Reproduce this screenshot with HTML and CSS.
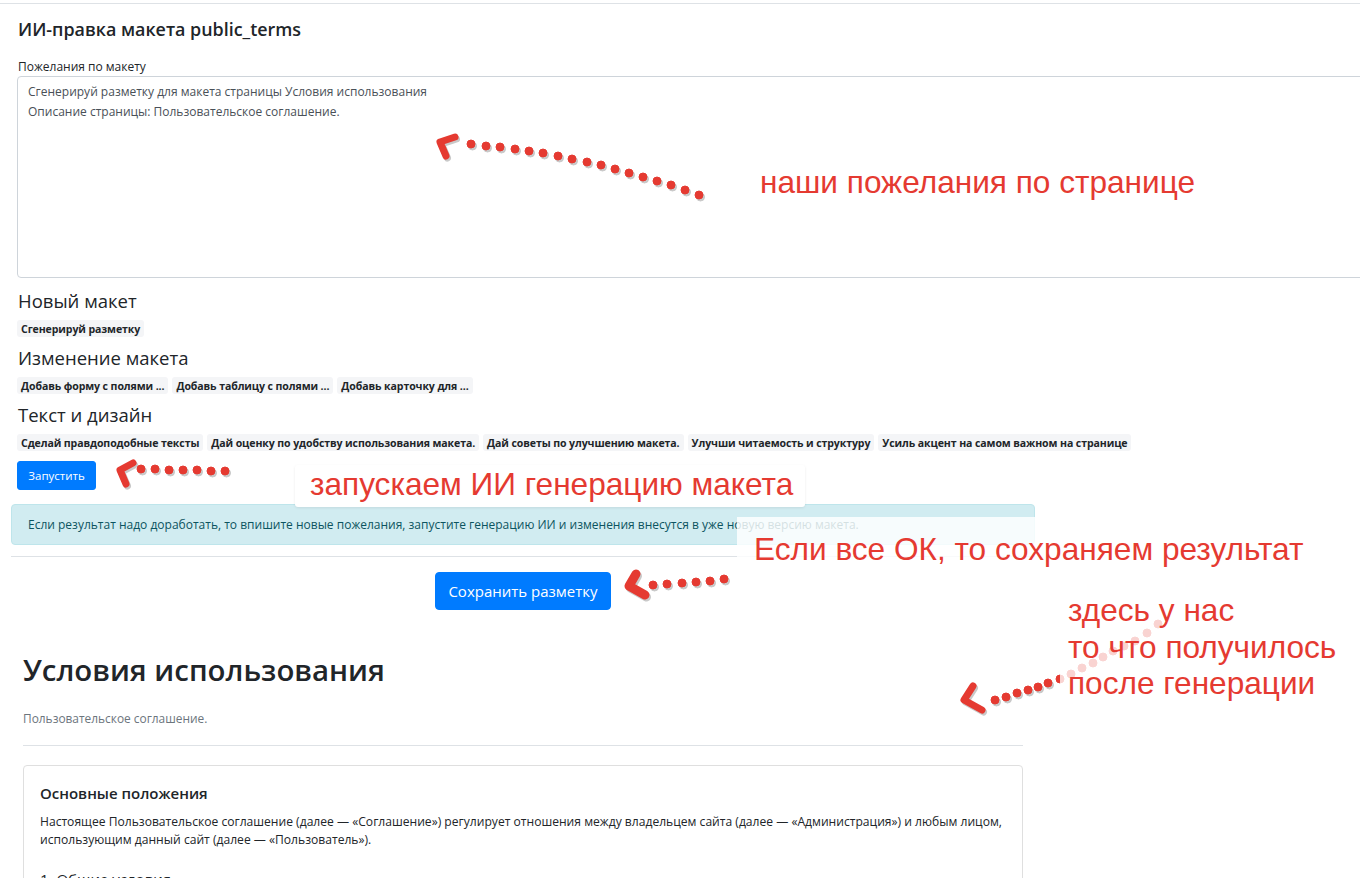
FILE: index.html
```html
<!DOCTYPE html>
<html lang="ru">
<head>
<meta charset="utf-8">
<title>ИИ-правка макета public_terms</title>
<link rel="stylesheet" href="styles.css">
</head>
<body>
<div class="page">
  <section class="editor">
    <h5 class="title">ИИ-правка макета public_terms</h5>
    <label class="label" for="wish">Пожелания по макету</label>
    <div class="textarea" id="wish">
      <div>Сгенерируй разметку для макета страницы Условия использования</div>
      <div>Описание страницы: Пользовательское соглашение.</div>
    </div>

    <h6 class="group">Новый макет</h6>
    <div class="chips">
      <span class="chip">Сгенерируй разметку</span>
    </div>

    <h6 class="group">Изменение макета</h6>
    <div class="chips">
      <span class="chip">Добавь форму с полями ...</span>
      <span class="chip">Добавь таблицу с полями ...</span>
      <span class="chip">Добавь карточку для ...</span>
    </div>

    <h6 class="group">Текст и дизайн</h6>
    <div class="chips">
      <span class="chip">Сделай правдоподобные тексты</span>
      <span class="chip">Дай оценку по удобству использования макета.</span>
      <span class="chip">Дай советы по улучшению макета.</span>
      <span class="chip">Улучши читаемость и структуру</span>
      <span class="chip">Усиль акцент на самом важном на странице</span>
    </div>

    <button class="btn btn-run" type="button">Запустить</button>
  </section>

  <section class="result">
    <div class="alert">Если результат надо доработать, то впишите новые пожелания, запустите генерацию ИИ и изменения внесутся в уже новую версию макета.</div>
    <hr class="sep">
    <div class="save-row">
      <button class="btn btn-save" type="button">Сохранить разметку</button>
    </div>

    <div class="preview">
      <h1 class="preview-title">Условия использования</h1>
      <p class="preview-sub">Пользовательское соглашение.</p>
      <hr class="preview-hr">
      <div class="card">
        <h5 class="card-title">Основные положения</h5>
        <p class="card-text">Настоящее Пользовательское соглашение (далее — «Соглашение») регулирует отношения между владельцем сайта (далее — «Администрация») и любым лицом, использующим данный сайт (далее — «Пользователь»).</p>
        <h6 class="card-sub">1. Общие условия</h6>
      </div>
    </div>
  </section>
</div>

<svg class="arrows" width="1360" height="878" viewBox="0 0 1360 878" aria-hidden="true">
  <g fill="#c9c9c9" stroke="#c9c9c9" transform="translate(1.5,2)">
    <polyline points="446,156 440,142 455,137" fill="none" stroke-width="7" stroke-linecap="round" stroke-linejoin="round"/>
    <circle cx="471" cy="144" r="4"/><circle cx="486" cy="146" r="4"/><circle cx="500" cy="147" r="4"/><circle cx="515" cy="149" r="4"/><circle cx="529" cy="151" r="4"/><circle cx="543" cy="153" r="4"/><circle cx="558" cy="156" r="4"/><circle cx="572" cy="159" r="4"/><circle cx="587" cy="162" r="4"/><circle cx="601" cy="165" r="4"/><circle cx="615" cy="169" r="4"/><circle cx="629" cy="173" r="4"/><circle cx="643" cy="177" r="4"/><circle cx="657" cy="181" r="4"/><circle cx="671" cy="185" r="4"/><circle cx="685" cy="190" r="4"/><circle cx="699" cy="195" r="4"/>
    <polyline points="126,484 120,470 133,463" fill="none" stroke-width="7" stroke-linecap="round" stroke-linejoin="round"/>
    <circle cx="141" cy="469" r="4"/><circle cx="155" cy="469" r="4"/><circle cx="169" cy="470" r="4"/><circle cx="183" cy="470" r="4"/><circle cx="197" cy="470" r="4"/><circle cx="211" cy="471" r="4"/><circle cx="225" cy="471" r="4"/>
    <polyline points="636,574 629,586 645,595" fill="none" stroke-width="9" stroke-linecap="round" stroke-linejoin="round"/>
    <circle cx="653" cy="585" r="4"/><circle cx="667" cy="584" r="4"/><circle cx="682" cy="583" r="4"/><circle cx="696" cy="582" r="4"/><circle cx="710" cy="581" r="4"/><circle cx="724" cy="579" r="4"/>
    <polyline points="973,686 964,700 982,710" fill="none" stroke-width="7" stroke-linecap="round" stroke-linejoin="round"/>
    <circle cx="995" cy="700" r="4"/><circle cx="1006" cy="697" r="4"/><circle cx="1017" cy="693" r="4"/><circle cx="1028" cy="690" r="4"/><circle cx="1038" cy="687" r="4"/><circle cx="1048" cy="683" r="4"/>
  </g>
  <g fill="#e53a31" stroke="#e53a31">
    <polyline points="446,156 440,142 455,137" fill="none" stroke-width="7" stroke-linecap="round" stroke-linejoin="round"/>
    <circle cx="471" cy="144" r="4"/><circle cx="486" cy="146" r="4"/><circle cx="500" cy="147" r="4"/><circle cx="515" cy="149" r="4"/><circle cx="529" cy="151" r="4"/><circle cx="543" cy="153" r="4"/><circle cx="558" cy="156" r="4"/><circle cx="572" cy="159" r="4"/><circle cx="587" cy="162" r="4"/><circle cx="601" cy="165" r="4"/><circle cx="615" cy="169" r="4"/><circle cx="629" cy="173" r="4"/><circle cx="643" cy="177" r="4"/><circle cx="657" cy="181" r="4"/><circle cx="671" cy="185" r="4"/><circle cx="685" cy="190" r="4"/><circle cx="699" cy="195" r="4"/>
    <polyline points="126,484 120,470 133,463" fill="none" stroke-width="7" stroke-linecap="round" stroke-linejoin="round"/>
    <circle cx="141" cy="469" r="4"/><circle cx="155" cy="469" r="4"/><circle cx="169" cy="470" r="4"/><circle cx="183" cy="470" r="4"/><circle cx="197" cy="470" r="4"/><circle cx="211" cy="471" r="4"/><circle cx="225" cy="471" r="4"/>
    <polyline points="636,574 629,586 645,595" fill="none" stroke-width="9" stroke-linecap="round" stroke-linejoin="round"/>
    <circle cx="653" cy="585" r="4"/><circle cx="667" cy="584" r="4"/><circle cx="682" cy="583" r="4"/><circle cx="696" cy="582" r="4"/><circle cx="710" cy="581" r="4"/><circle cx="724" cy="579" r="4"/>
    <polyline points="973,686 964,700 982,710" fill="none" stroke-width="7" stroke-linecap="round" stroke-linejoin="round"/>
    <circle cx="995" cy="700" r="4"/><circle cx="1006" cy="697" r="4"/><circle cx="1017" cy="693" r="4"/><circle cx="1028" cy="690" r="4"/><circle cx="1038" cy="687" r="4"/><circle cx="1048" cy="683" r="4"/>
    <circle cx="1060" cy="679" r="4"/><circle cx="1071" cy="674" r="4"/><circle cx="1082" cy="668" r="4"/><circle cx="1093" cy="663" r="4"/><circle cx="1103" cy="657" r="4"/><circle cx="1113" cy="651" r="4"/><circle cx="1124" cy="646" r="4"/><circle cx="1135" cy="641" r="4"/><circle cx="1147" cy="633" r="4"/><circle cx="1158" cy="624" r="4"/>
  </g>
</svg>

<div class="note note-wish">наши пожелания по странице</div>
<div class="note note-run">запускаем ИИ генерацию макета</div>
<div class="note note-save">Если все ОК, то сохраняем результат</div>
<div class="note note-result">здесь у нас<br>то что получилось<br>после генерации</div>
</body>
</html>
```

FILE: styles.css
```css
html, body {
  margin: 0;
  padding: 0;
  background: #fff;
  overflow: hidden;
}
body {
  font-family: "Open Sans", "Noto Sans", sans-serif;
  color: #212529;
  width: 1360px;
  height: 878px;
  position: relative;
}
.page {
  margin-top: 3px;
  border-top: 1px solid #dee2e6;
}
.editor {
  padding-left: 17px;
}
.title {
  margin: 13px 0 0 1px;
  font-size: 17.9px;
  line-height: 24px;
  font-weight: 600;
}
.label {
  display: block;
  margin-top: 17px;
  font-size: 12px;
  line-height: 18px;
  padding-left: 1px;
}
.textarea {
  box-sizing: border-box;
  width: 1400px;
  height: 202px;
  border: 1px solid #ced4da;
  border-radius: 4px 0 0 4px;
  padding: 5px 10px;
  font-size: 12px;
  line-height: 20px;
  color: #495057;
}
.group {
  margin: 12px 0 0 1px;
  font-size: 18.5px;
  line-height: 22px;
  font-weight: 500;
}
.chips {
  display: flex;
  gap: 4px;
  margin-top: 8px;
  height: 17px;
}
.chips + .group { margin-top: 10px; }
.chip {
  display: inline-flex;
  align-items: center;
  height: 17px;
  padding: 0 4px;
  background: #f4f5f7;
  border-radius: 3px;
  font-size: 10.57px;
  font-weight: 700;
  color: #212529;
  letter-spacing: -0.1px;
  white-space: nowrap;
}
.btn {
  font-family: inherit;
  border: 1px solid #007bff;
  background: #007bff;
  color: #fff;
  border-radius: 3px;
  cursor: pointer;
}
.btn-run {
  margin-top: 10px;
  width: 79px;
  height: 29px;
  padding: 0;
  font-size: 11.5px;
}
.result {
  margin-left: 11px;
  width: 1024px;
}
.alert {
  box-sizing: border-box;
  margin-top: 14px;
  height: 41px;
  padding: 0 16px;
  display: flex;
  align-items: center;
  background: #d1ecf1;
  border: 1px solid #bee5eb;
  border-radius: 4px;
  color: #0c5460;
  font-size: 12px;
}
.sep {
  margin: 11px 0 0;
  border: 0;
  border-top: 1px solid #dee2e6;
}
.save-row {
  display: flex;
  justify-content: center;
  margin-top: 15px;
}
.btn-save {
  width: 176px;
  height: 38px;
  font-size: 15px;
  border-radius: 4px;
  padding: 0;
}
.preview {
  padding: 0 12px;
}
.preview-title {
  margin: 42px 0 0;
  font-size: 29.4px;
  line-height: 36px;
  font-weight: 600;
}
.preview-sub {
  margin: 21px 0 0;
  font-size: 11.9px;
  line-height: 18px;
  color: #6c757d;
}
.preview-hr {
  margin: 18px 0 0;
  border: 0;
  border-top: 1px solid #dee2e6;
}
.card {
  margin-top: 19px;
  border: 1px solid #dfdfdf;
  border-radius: 4px;
  padding: 17px 16px 20px;
}
.card-title {
  margin: 0;
  font-size: 15px;
  line-height: 20px;
  font-weight: 600;
}
.card-text {
  margin: 10px 0 0;
  font-size: 12.1px;
  line-height: 18px;
}
.card-sub {
  margin: 20px 0 0;
  font-size: 15px;
  line-height: 20px;
  font-weight: 500;
}
.arrows {
  position: absolute;
  left: 0;
  top: 0;
  pointer-events: none;
}
.note {
  position: absolute;
  font-family: "Liberation Sans", Arial, sans-serif;
  color: #e53a31;
  font-size: 31.6px;
  line-height: 36px;
  white-space: nowrap;
}
.note-wish {
  left: 760px;
  top: 164px;
}
.note-run {
  left: 295px;
  top: 465px;
  width: 510px;
  height: 42px;
  box-sizing: border-box;
  padding: 1px 0 0 15px;
  background: #fff;
  border-radius: 3px;
  box-shadow: 0 1px 3px rgba(0,0,0,0.08);
}
.note-save {
  left: 737px;
  top: 517px;
  width: 623px;
  height: 58px;
  box-sizing: border-box;
  padding: 14px 0 0 17px;
  background: rgba(255,255,255,0.82);
}
.note-result {
  left: 1060px;
  top: 590px;
  width: 300px;
  height: 122px;
  box-sizing: border-box;
  padding: 2px 0 0 8px;
  line-height: 36.5px;
  background: rgba(255,255,255,0.78);
}
```
